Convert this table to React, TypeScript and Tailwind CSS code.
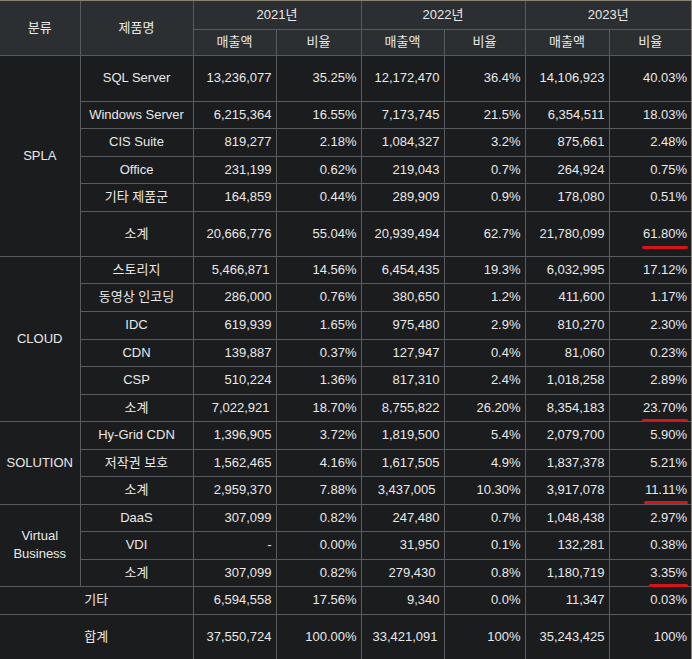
import React from "react";

type Row = {
  name: string;
  v: [string, string, string, string, string, string];
  h: string;
  u?: "a" | "b" | "c";
  pad?: [number, number, number];
};

const LINE = "border-[#575b5f]";
const cellB = `border-r border-b ${LINE}`;
const lastB = `border-b ${LINE}`;

const groups: { label: React.ReactNode; rows: Row[] }[] = [
  {
    label: "SPLA",
    rows: [
      { name: "SQL Server", v: ["13,236,077", "35.25%", "12,172,470", "36.4%", "14,106,923", "40.03%"], h: "h-[46px]" },
      { name: "Windows Server", v: ["6,215,364", "16.55%", "7,173,745", "21.5%", "6,354,511", "18.03%"], h: "h-[27px]" },
      { name: "CIS Suite", v: ["819,277", "2.18%", "1,084,327", "3.2%", "875,661", "2.48%"], h: "h-[28px]" },
      { name: "Office", v: ["231,199", "0.62%", "219,043", "0.7%", "264,924", "0.75%"], h: "h-[27px]" },
      { name: "기타 제품군", v: ["164,859", "0.44%", "289,909", "0.9%", "178,080", "0.51%"], h: "h-[28px]" },
      { name: "소계", v: ["20,666,776", "55.04%", "20,939,494", "62.7%", "21,780,099", "61.80%"], h: "h-[45px]", u: "a" },
    ],
  },
  {
    label: "CLOUD",
    rows: [
      { name: "스토리지", v: ["5,466,871", "14.56%", "6,454,435", "19.3%", "6,032,995", "17.12%"], h: "h-[27px]", pad: [2, 0, 0] },
      { name: "동영상 인코딩", v: ["286,000", "0.76%", "380,650", "1.2%", "411,600", "1.17%"], h: "h-[28px]" },
      { name: "IDC", v: ["619,939", "1.65%", "975,480", "2.9%", "810,270", "2.30%"], h: "h-[28px]" },
      { name: "CDN", v: ["139,887", "0.37%", "127,947", "0.4%", "81,060", "0.23%"], h: "h-[27px]" },
      { name: "CSP", v: ["510,224", "1.36%", "817,310", "2.4%", "1,018,258", "2.89%"], h: "h-[28px]" },
      { name: "소계", v: ["7,022,921", "18.70%", "8,755,822", "26.20%", "8,354,183", "23.70%"], h: "h-[27px]", u: "b", pad: [2, 0, 0] },
    ],
  },
  {
    label: "SOLUTION",
    rows: [
      { name: "Hy-Grid CDN", v: ["1,396,905", "3.72%", "1,819,500", "5.4%", "2,079,700", "5.90%"], h: "h-[28px]" },
      { name: "저작권 보호", v: ["1,562,465", "4.16%", "1,617,505", "4.9%", "1,837,378", "5.21%"], h: "h-[27px]" },
      { name: "소계", v: ["2,959,370", "7.88%", "3,437,005", "10.30%", "3,917,078", "11.11%"], h: "h-[28px]", u: "c", pad: [0, 4, 0] },
    ],
  },
  {
    label: (
      <span className="inline-block leading-[18px]">
        Virtual
        <br />
        Business
      </span>
    ),
    rows: [
      { name: "DaaS", v: ["307,099", "0.82%", "247,480", "0.7%", "1,048,438", "2.97%"], h: "h-[27px]" },
      { name: "VDI", v: ["-", "0.00%", "31,950", "0.1%", "132,281", "0.38%"], h: "h-[28px]" },
      { name: "소계", v: ["307,099", "0.82%", "279,430", "0.8%", "1,180,719", "3.35%"], h: "h-[27px]", u: "b", pad: [0, 4, 0] },
    ],
  },
];

const totals: Row[] = [
  { name: "기타", v: ["6,594,558", "17.56%", "9,340", "0.0%", "11,347", "0.03%"], h: "h-[28px]" },
  { name: "합계", v: ["37,550,724", "100.00%", "33,421,091", "100%", "35,243,425", "100%"], h: "h-[45px]", pad: [0, 2, 0] },
];

function Under({ children, kind }: { children: React.ReactNode; kind: "a" | "b" | "c" }) {
  const pos =
    kind === "a" ? "-bottom-[6px]" : kind === "b" ? "-bottom-[5px]" : "-bottom-[4px]";
  return (
    <span className="relative inline-block">
      {children}
      <span className={`absolute -left-[1px] -right-[1px] ${pos} h-[3px] rounded-full bg-[#d4161b]`} />
    </span>
  );
}

function ValueCells({ r }: { r: Row }) {
  const padCls = (i: number) => {
    const p = r.pad ? r.pad[i] : 0;
    if (p === 2) return "pr-[6px]";
    if (p === 4) return "pr-[8px]";
    return "pr-[4px]";
  };
  return (
    <>
      {r.v.map((val, i) => {
        const isLast = i === 5;
        const amountIdx = i % 2 === 0 ? i / 2 : -1;
        const pc = amountIdx >= 0 ? padCls(amountIdx) : "pr-[4px]";
        return (
          <td key={i} className={`${isLast ? lastB : cellB} text-right ${pc} whitespace-nowrap`}>
            {isLast && r.u ? <Under kind={r.u}>{val}</Under> : val}
          </td>
        );
      })}
    </>
  );
}

export default function App() {
  const head = "bg-[#2c2f32]";
  return (
    <div className="w-[692px] h-[659px] overflow-hidden bg-[#1b1c1e]">
      <div className="w-[692px] border-t border-r border-[#8a8170] [font-family:'Liberation_Sans','Noto_Sans_CJK_KR',sans-serif] text-[13px] text-[#e9e9e9]">
        <table className="w-[691px] table-fixed border-collapse">
          <colgroup>
            <col className="w-[80px]" />
            <col className="w-[113px]" />
            <col className="w-[83px]" />
            <col className="w-[85px]" />
            <col className="w-[83px]" />
            <col className="w-[81px]" />
            <col className="w-[84px]" />
            <col className="w-[82px]" />
          </colgroup>
          <thead>
            <tr className="h-[28px]">
              <th rowSpan={2} className={`${head} ${cellB} font-normal text-center`}>분류</th>
              <th rowSpan={2} className={`${head} ${cellB} font-normal text-center`}>제품명</th>
              <th colSpan={2} className={`${head} ${cellB} font-normal text-center`}>2021년</th>
              <th colSpan={2} className={`${head} ${cellB} font-normal text-center`}>2022년</th>
              <th colSpan={2} className={`${head} ${lastB} font-normal text-center`}>2023년</th>
            </tr>
            <tr className="h-[26px]">
              <th className={`${head} ${cellB} font-normal text-center`}>매출액</th>
              <th className={`${head} ${cellB} font-normal text-center`}>비율</th>
              <th className={`${head} ${cellB} font-normal text-center`}>매출액</th>
              <th className={`${head} ${cellB} font-normal text-center`}>비율</th>
              <th className={`${head} ${cellB} font-normal text-center`}>매출액</th>
              <th className={`${head} ${lastB} font-normal text-center`}>비율</th>
            </tr>
          </thead>
          <tbody>
            {groups.map((g, gi) =>
              g.rows.map((r, ri) => (
                <tr key={`${gi}-${ri}`} className={r.h}>
                  {ri === 0 && (
                    <td rowSpan={g.rows.length} className={`${cellB} text-center`}>
                      {g.label}
                    </td>
                  )}
                  <td className={`${cellB} text-center whitespace-nowrap`}>{r.name}</td>
                  <ValueCells r={r} />
                </tr>
              ))
            )}
            {totals.map((r, i) => (
              <tr key={`t${i}`} className={r.h}>
                <td colSpan={2} className={`${cellB} text-center`}>{r.name}</td>
                <ValueCells r={r} />
              </tr>
            ))}
          </tbody>
        </table>
      </div>
    </div>
  );
}
